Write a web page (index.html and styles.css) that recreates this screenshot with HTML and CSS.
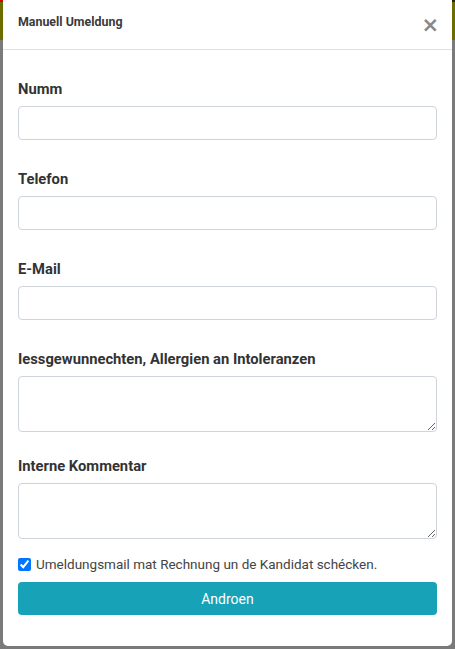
FILE: index.html
```html
<!DOCTYPE html>
<html lang="lb">
<head>
<meta charset="utf-8">
<title>Manuell Umeldung</title>
<link rel="stylesheet" href="styles.css">
</head>
<body>
<div class="page">
  <div class="topbar"><span class="topbar-red"></span></div>
  <div class="navstrip"></div>
  <div class="backdrop"></div>
  <div class="modal">
    <div class="modal-header">
      <h5 class="modal-title">Manuell Umeldung</h5>
      <button class="close" type="button" aria-label="Close">&times;</button>
    </div>
    <form class="modal-body">
      <div class="group">
        <label class="lbl" for="f1">Numm</label>
        <input class="field" id="f1" type="text">
      </div>
      <div class="group">
        <label class="lbl" for="f2">Telefon</label>
        <input class="field" id="f2" type="text">
      </div>
      <div class="group">
        <label class="lbl" for="f3">E-Mail</label>
        <input class="field" id="f3" type="text">
      </div>
      <div class="group group-area">
        <label class="lbl" for="f4">Iessgewunnechten, Allergien an Intoleranzen</label>
        <textarea class="field area" id="f4"></textarea>
      </div>
      <div class="group group-area">
        <label class="lbl" for="f5">Interne Kommentar</label>
        <textarea class="field area" id="f5"></textarea>
      </div>
      <label class="check"><input type="checkbox" checked> Umeldungsmail mat Rechnung un de Kandidat schécken.</label>
      <button class="btn" type="button">Androen</button>
    </form>
  </div>
</div>
</body>
</html>
```
FILE: styles.css
```css
html, body {
  margin: 0;
  padding: 0;
  width: 455px;
  height: 649px;
  overflow: hidden;
  font-family: Roboto, "Liberation Sans", sans-serif;
  color: #333;
}
.page {
  position: relative;
  width: 455px;
  height: 649px;
  background: #f4f4f4;
}
.topbar {
  height: 2px;
  background: #1f2326;
}
.topbar-red {
  display: block;
  width: 23px;
  height: 2px;
  background: #d40000;
}
.navstrip {
  height: 38px;
  background: #d8d800;
}
.backdrop {
  position: absolute;
  top: 2px;
  left: 0;
  right: 0;
  bottom: 0;
  background: rgba(0, 0, 0, 0.5);
}
.modal {
  position: absolute;
  left: 3px;
  top: 0;
  width: 449px;
  height: 646px;
  background: #fff;
  border-radius: 0 0 5px 5px;
  box-sizing: border-box;
}
.modal-header {
  height: 50px;
  box-sizing: border-box;
  border-bottom: 1px solid #dee2e6;
  display: flex;
  align-items: center;
  justify-content: space-between;
  padding: 0 13px 0 15px;
}
.modal-title {
  margin: 0;
  font-size: 12.4px;
  font-weight: 700;
  color: #3a3a3a;
  position: relative;
  top: -3px;
}
.close {
  border: 0;
  background: none;
  padding: 0;
  font-size: 21px;
  font-weight: 700;
  color: #888;
  line-height: 1;
  position: relative;
  top: 1px;
  cursor: pointer;
  font-family: "DejaVu Sans", sans-serif;
}
.modal-body {
  display: flex;
  flex-direction: column;
  padding: 27px 15px 0;
  gap: 27px;
}
.group {
  display: flex;
  flex-direction: column;
  gap: 5px;
}
.group-area {
  margin-bottom: -5px;
}
.lbl {
  font-size: 14.75px;
  font-weight: 700;
  line-height: 24px;
  color: #333;
}
.field {
  height: 34px;
  box-sizing: border-box;
  border: 1px solid #ced4da;
  border-radius: 4px;
  margin: 0;
  padding: 6px 12px;
  font-family: inherit;
  font-size: 14px;
}
.area {
  height: 56px;
  resize: vertical;
}
.check {
  display: flex;
  align-items: center;
  gap: 5px;
  font-size: 13.5px;
  color: #444;
  margin-top: -5px;
}
.check input {
  margin: 0;
  width: 13px;
  height: 13px;
}
.btn {
  height: 33px;
  margin-top: -17px;
  border: 0;
  border-radius: 4px;
  background: #17a2b8;
  color: #fff;
  font-family: inherit;
  font-size: 14px;
  font-weight: 400;
}
```
